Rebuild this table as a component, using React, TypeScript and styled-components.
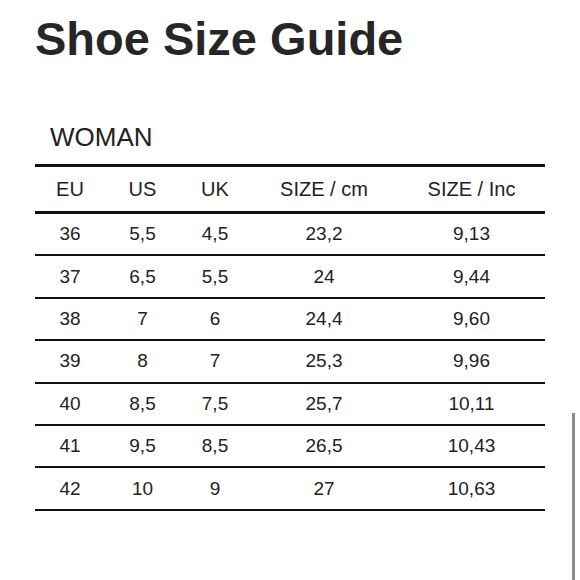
import styled, { createGlobalStyle } from 'styled-components';

const rows = [
  ['36', '5,5', '4,5', '23,2', '9,13'],
  ['37', '6,5', '5,5', '24', '9,44'],
  ['38', '7', '6', '24,4', '9,60'],
  ['39', '8', '7', '25,3', '9,96'],
  ['40', '8,5', '7,5', '25,7', '10,11'],
  ['41', '9,5', '8,5', '26,5', '10,43'],
  ['42', '10', '9', '27', '10,63'],
];

const headers = ['EU', 'US', 'UK', 'SIZE / cm', 'SIZE / Inc'];
const widths = [70, 75, 70, 148, 147];

export default function App() {
  return (
    <Page>
      <GlobalStyle />
      <Title>Shoe Size Guide</Title>
      <Section>WOMAN</Section>
      <SizeTable>
        <colgroup>
          {widths.map((w, i) => (
            <col key={i} style={{ width: w }} />
          ))}
        </colgroup>
        <thead>
          <tr>
            {headers.map((h) => (
              <HeadCell key={h}>{h}</HeadCell>
            ))}
          </tr>
        </thead>
        <tbody>
          {rows.map((row) => (
            <Row key={row[0]}>
              {row.map((v, i) => (
                <Cell key={i}>{v}</Cell>
              ))}
            </Row>
          ))}
        </tbody>
      </SizeTable>
      <ScrollThumb />
    </Page>
  );
}

const GlobalStyle = createGlobalStyle`
  html, body {
    margin: 0;
    background: #fff;
  }
  body {
    font-family: 'Liberation Sans', Arial, sans-serif;
    color: #222;
  }
`;

const Page = styled.div`
  position: relative;
  width: 580px;
  height: 580px;
  overflow: hidden;
  padding: 15px 0 0 35px;
  box-sizing: border-box;
`;

const Title = styled.h1`
  margin: 0;
  font-size: 47px;
  line-height: 47px;
  font-weight: 700;
  color: #262626;
`;

const Section = styled.div`
  margin: 62px 0 0 15px;
  font-size: 26px;
  line-height: 26px;
  color: #222;
`;

const SizeTable = styled.table`
  margin-top: 14px;
  width: 510px;
  border-collapse: collapse;
  table-layout: fixed;
  border-top: 3px solid #111;
`;

const HeadCell = styled.th`
  height: 44px;
  padding: 0;
  font-weight: 400;
  font-size: 20px;
  text-align: center;
  vertical-align: middle;
  border-bottom: 3px solid #111;
  color: #222;
`;

const Row = styled.tr`
  border-bottom: 2px solid #111;
`;

const Cell = styled.td`
  height: 40.4px;
  padding: 0;
  font-size: 19px;
  text-align: center;
  vertical-align: middle;
  color: #222;
`;

const ScrollThumb = styled.div`
  position: absolute;
  right: 5px;
  top: 413px;
  bottom: 0;
  width: 3px;
  background: #8c8c8c;
`;
